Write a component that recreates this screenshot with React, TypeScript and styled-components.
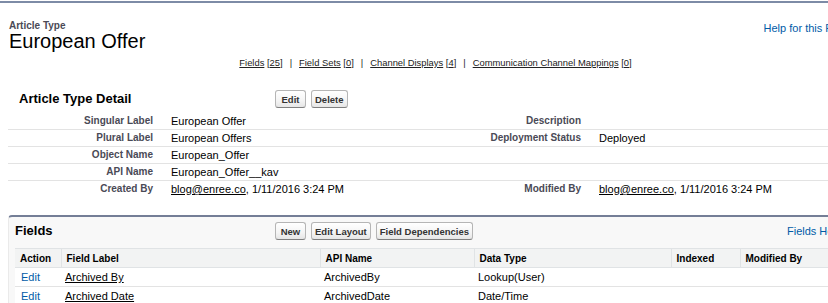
import styled, { createGlobalStyle } from "styled-components";

const GlobalStyle = createGlobalStyle`
  html, body {
    margin: 0;
    padding: 0;
    background: #fff;
    overflow: hidden;
  }
  body {
    font-family: "Liberation Sans", Arial, sans-serif;
    color: #000;
  }
`;

const details = [
  { label: "Singular Label", value: "European Offer", label2: "Description", value2: "" },
  { label: "Plural Label", value: "European Offers", label2: "Deployment Status", value2: "Deployed" },
  { label: "Object Name", value: "European_Offer", label2: "", value2: "" },
  { label: "API Name", value: "European_Offer__kav", label2: "", value2: "" },
];

const fields = [
  { label: "Archived By", api: "ArchivedBy", type: "Lookup(User)" },
  { label: "Archived Date", api: "ArchivedDate", type: "Date/Time" },
];

const tabs = [
  { name: "Fields", count: 25 },
  { name: "Field Sets", count: 0 },
  { name: "Channel Displays", count: 4 },
  { name: "Communication Channel Mappings", count: 0 },
];

const App = () => {
  return (
    <>
      <GlobalStyle />
      <Page>
        <Content>
          <Header>
            <div>
              <TypeLabel>Article Type</TypeLabel>
              <PageTitle>European Offer</PageTitle>
            </div>
            <HelpLink>Help for this Page</HelpLink>
          </Header>

          <RelatedLinks>
            {tabs.map((t, i) => (
              <span key={t.name}>
                {i > 0 && <Pipe>|</Pipe>}
                <u>{t.name}</u> <u>[{t.count}]</u>
              </span>
            ))}
          </RelatedLinks>

          <DetailHeader>
            <BlockTitle $pad={11}>Article Type Detail</BlockTitle>
            <ButtonRow>
              <Btn>Edit</Btn>
              <Btn>Delete</Btn>
            </ButtonRow>
          </DetailHeader>

          <DetailGrid>
            {details.map((d) => (
              <Row key={d.label}>
                <LabelCell>{d.label}</LabelCell>
                <DataCell>{d.value}</DataCell>
                <LabelCell>{d.label2}</LabelCell>
                <DataCell>{d.value2}</DataCell>
              </Row>
            ))}
            <Row $last>
              <LabelCell>Created By</LabelCell>
              <DataCell>
                <u>blog@enree.co</u>, 1/11/2016 3:24 PM
              </DataCell>
              <LabelCell>Modified By</LabelCell>
              <DataCell>
                <u>blog@enree.co</u>, 1/11/2016 3:24 PM
              </DataCell>
            </Row>
          </DetailGrid>

          <Panel>
            <PanelHeader>
              <BlockTitle $pad={6}>Fields</BlockTitle>
              <ButtonRow>
                <Btn>New</Btn>
                <Btn>Edit Layout</Btn>
                <Btn>Field Dependencies</Btn>
              </ButtonRow>
              <PanelHelp>Fields Help</PanelHelp>
            </PanelHeader>
            <ListTable>
              <colgroup>
                <col style={{ width: 46 }} />
                <col style={{ width: 259 }} />
                <col style={{ width: 154 }} />
                <col style={{ width: 197 }} />
                <col style={{ width: 69 }} />
                <col />
              </colgroup>
              <thead>
                <tr>
                  <Th>Action</Th>
                  <Th>Field Label</Th>
                  <Th>API Name</Th>
                  <Th>Data Type</Th>
                  <Th>Indexed</Th>
                  <Th>Modified By</Th>
                </tr>
              </thead>
              <tbody>
                {fields.map((f) => (
                  <tr key={f.api}>
                    <Td>
                      <ActionLink>Edit</ActionLink>
                    </Td>
                    <Td>
                      <u>{f.label}</u>
                    </Td>
                    <Td>{f.api}</Td>
                    <Td>{f.type}</Td>
                    <Td />
                    <Td />
                  </tr>
                ))}
              </tbody>
            </ListTable>
          </Panel>
        </Content>
      </Page>
    </>
  );
};

const Page = styled.div`
  margin-top: 1px;
  border-top: 2px solid #7d8ba6;
  width: 871px;
`;

const Content = styled.div`
  padding: 0 8px;
`;

const Header = styled.div`
  display: flex;
  justify-content: space-between;
  align-items: flex-start;
  padding: 17px 0 0 1px;
`;

const TypeLabel = styled.div`
  font-size: 10px;
  line-height: 11px;
  font-weight: bold;
  color: #4a4a56;
`;

const PageTitle = styled.h1`
  margin: 0;
  font-size: 20px;
  line-height: 20px;
  font-weight: normal;
  color: #000;
`;

const HelpLink = styled.div`
  margin: 2px 12px 0 0;
  font-size: 11px;
  line-height: 13px;
  color: #015ba7;
`;

const RelatedLinks = styled.div`
  margin-top: 6px;
  text-align: center;
  font-size: 9.4px;
  line-height: 12px;
  color: #222;

  u {
    text-decoration-thickness: 1px;
  }
`;

const Pipe = styled.span`
  margin: 0 7px;
`;

const DetailHeader = styled.div`
  display: grid;
  grid-template-columns: 267px auto;
  align-items: center;
  margin-top: 17px;
  padding: 4px 0 5px;
`;

const BlockTitle = styled.h2<{ $pad: number }>`
  margin: 0;
  padding-left: ${(p) => p.$pad}px;
  font-size: 13px;
  line-height: 18px;
  font-weight: bold;
  color: #000;
`;

const ButtonRow = styled.div`
  display: flex;
  gap: 5px;
`;

const Btn = styled.button`
  height: 18px;
  min-width: 31px;
  padding: 0 3px;
  font-family: "Liberation Sans", Arial, sans-serif;
  font-size: 9.5px;
  font-weight: bold;
  color: #333;
  background: linear-gradient(#ffffff, #f4f4f4 60%, #e6e6e6);
  border: 1px solid #b5b5b5;
  border-bottom-color: #7f7f7f;
  border-radius: 3px;
`;

const DetailGrid = styled.div`
  display: grid;
  grid-template-columns: 153px 278px 150px 1fr;
`;

const Row = styled.div<{ $last?: boolean }>`
  display: contents;

  & > div {
    border-bottom: ${(p) => (p.$last ? "none" : "1px solid #e3e3e3")};
  }
`;

const LabelCell = styled.div`
  height: 16px;
  padding-right: 8px;
  text-align: right;
  font-size: 10px;
  line-height: 16px;
  font-weight: bold;
  color: #4a4a56;
`;

const DataCell = styled.div`
  height: 16px;
  padding-left: 10px;
  font-size: 11px;
  line-height: 16px;
  color: #000;
`;

const Panel = styled.div`
  margin-top: 18px;
  background: #f8f8f8;
  border: 1px solid #eaeaea;
  border-top: 2px solid #747e96;
  border-radius: 4px 4px 0 0;
`;

const PanelHeader = styled.div`
  display: grid;
  grid-template-columns: 266px auto 1fr;
  align-items: center;
  padding: 5px 0 8px;
`;

const PanelHelp = styled.div`
  justify-self: end;
  margin-right: 20px;
  font-size: 11px;
  color: #015ba7;
`;

const ListTable = styled.table`
  width: calc(100% - 12px);
  margin: 0 6px;
  table-layout: fixed;
  border-collapse: collapse;
  font-size: 11px;
`;

const Th = styled.th`
  height: 18px;
  padding: 0 5px;
  text-align: left;
  font-size: 10px;
  font-weight: bold;
  color: #000;
  background: #f2f3f3;
  border-top: 1px solid #e0e3e5;
  border-bottom: 1px solid #e0e3e5;
  & + & {
    border-left: 1px solid #e0e3e5;
  }
`;

const Td = styled.td`
  height: 18px;
  padding: 0 4px;
  background: #fff;
  border-bottom: 1px solid #e3e3e3;
  color: #000;
  white-space: nowrap;
`;

const ActionLink = styled.span`
  padding-left: 2px;
  color: #015ba7;
`;

export default App;
